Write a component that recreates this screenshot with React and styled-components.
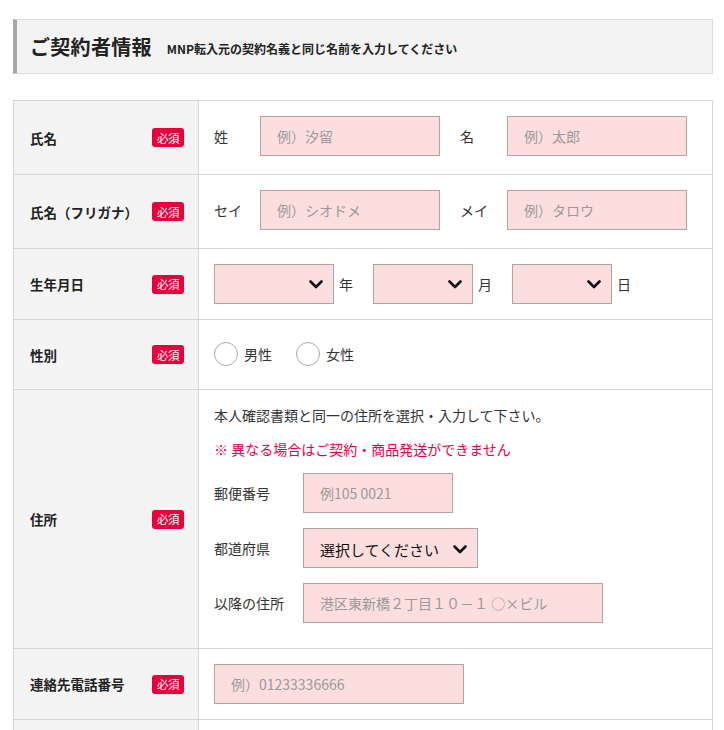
import React from 'react'
import styled, { createGlobalStyle } from 'styled-components'

const GlobalStyle = createGlobalStyle`
  body {
    margin: 0;
    background: #fff;
    font-family: "Noto Sans CJK JP", "Noto Sans", sans-serif;
    color: #333;
  }
`

const Chevron = () => (
  <svg width="14" height="9" viewBox="0 0 14 9">
    <path d="M1.5 1.5 L7 7 L12.5 1.5" fill="none" stroke="#111" strokeWidth="2.6" strokeLinecap="round" strokeLinejoin="round" />
  </svg>
)

const App = () => {
  return (
    <>
      <GlobalStyle />
      <Page>
        <Header>
          <Title>ご契約者情報</Title>
          <Sub>MNP転入元の契約名義と同じ名前を入力してください</Sub>
        </Header>
        <Table>
          <Row h={73}>
            <LabelCell><span>氏名</span><Badge>必須</Badge></LabelCell>
            <Cell lift={3}>
              <FieldLabel w={46}>姓</FieldLabel>
              <Input w={180} placeholder="例）汐留" />
              <FieldLabel w={67} pl={20}>名</FieldLabel>
              <Input w={180} placeholder="例）太郎" />
            </Cell>
          </Row>
          <Row h={73}>
            <LabelCell><span>氏名（フリガナ）</span><Badge>必須</Badge></LabelCell>
            <Cell lift={3}>
              <FieldLabel w={46}>セイ</FieldLabel>
              <Input w={180} placeholder="例）シオドメ" />
              <FieldLabel w={67} pl={20}>メイ</FieldLabel>
              <Input w={180} placeholder="例）タロウ" />
            </Cell>
          </Row>
          <Row h={70}>
            <LabelCell><span>生年月日</span><Badge>必須</Badge></LabelCell>
            <Cell lift={1}>
              <Select w={120}><span /><Chevron /></Select>
              <Unit>年</Unit>
              <Select w={100}><span /><Chevron /></Select>
              <Unit>月</Unit>
              <Select w={100}><span /><Chevron /></Select>
              <Unit>日</Unit>
            </Cell>
          </Row>
          <Row h={69}>
            <LabelCell><span>性別</span><Badge>必須</Badge></LabelCell>
            <Cell lift={2}>
              <Radio><Circle />男性</Radio>
              <Radio><Circle />女性</Radio>
            </Cell>
          </Row>
          <Row h={258}>
            <LabelCell><span>住所</span><Badge>必須</Badge></LabelCell>
            <AddressCell>
              <Note>本人確認書類と同一の住所を選択・入力して下さい。</Note>
              <Warn>※ 異なる場合はご契約・商品発送ができません</Warn>
              <AddrLine>
                <AddrLabel>郵便番号</AddrLabel>
                <Input w={150} placeholder="例105 0021" />
              </AddrLine>
              <AddrLine>
                <AddrLabel>都道府県</AddrLabel>
                <Select w={175} pad={16}><Chosen>選択してください</Chosen><Chevron /></Select>
              </AddrLine>
              <AddrLine>
                <AddrLabel>以降の住所</AddrLabel>
                <Input w={300} placeholder="港区東新橋２丁目１０－１ ○×ビル" />
              </AddrLine>
            </AddressCell>
          </Row>
          <Row h={70}>
            <LabelCell><span>連絡先電話番号</span><Badge>必須</Badge></LabelCell>
            <Cell lift={1}>
              <Input w={250} placeholder="例）01233336666" />
            </Cell>
          </Row>
          <Row h={70}>
            <LabelCell />
            <Cell />
          </Row>
        </Table>
      </Page>
    </>
  )
}

export default App

const Page = styled.div`
  padding: 19px 0 40px 13px;
  width: 700px;
`
const Header = styled.div`
  display: flex;
  align-items: center;
  height: 53px;
  background-color: #f3f3f3;
  border: 1px solid #dcdcdc;
  border-left: 4px solid #a9a9a9;
  padding-left: 13px;
  margin-bottom: 26px;
`
const Title = styled.h2`
  margin: 0 15px 0 0;
  font-size: 20px;
  font-weight: bold;
  color: #222;
  letter-spacing: 0.3px;
`
const Sub = styled.span`
  font-size: 12px;
  font-weight: bold;
  color: #222;
  padding-top: 3px;
`
const Table = styled.div`
  border: 1px solid #d6d6d6;
  border-bottom: none;
`
const Row = styled.div`
  display: grid;
  grid-template-columns: 185px 1fr;
  min-height: ${p => p.h}px;
  border-bottom: 1px solid #d6d6d6;
`
const LabelCell = styled.div`
  display: flex;
  align-items: center;
  justify-content: space-between;
  background-color: #f4f4f4;
  border-right: 1px solid #d6d6d6;
  padding: 0 14px 0 16px;
  font-size: 13.5px;
  font-weight: bold;
  color: #222;
`
const Badge = styled.span`
  display: inline-flex;
  align-items: center;
  justify-content: center;
  width: 32px;
  height: 19px;
  border-radius: 3px;
  background-color: #e8003a;
  color: #fff;
  font-size: 11.5px;
  font-weight: normal;
  letter-spacing: -0.5px;
`
const Cell = styled.div`
  display: flex;
  align-items: center;
  padding: 0 15px ${p => p.lift || 0}px;
  font-size: 14px;
`
const FieldLabel = styled.span`
  flex-shrink: 0;
  width: ${p => p.w}px;
  padding-left: ${p => p.pl || 0}px;
  box-sizing: border-box;
  white-space: nowrap;
  color: #333;
`
const Input = styled.input`
  flex-shrink: 0;
  box-sizing: border-box;
  width: ${p => p.w}px;
  height: 40px;
  background-color: #fddede;
  border: 1px solid #b4a2a2;
  border-radius: 0;
  padding: 0 16px;
  font-family: "Noto Sans CJK JP", sans-serif;
  font-size: 14px;
  outline: none;
  &::placeholder {
    color: #9a9a9a;
  }
`
const Select = styled.div`
  flex-shrink: 0;
  box-sizing: border-box;
  display: flex;
  align-items: center;
  justify-content: space-between;
  width: ${p => p.w}px;
  height: 40px;
  background-color: #fddede;
  border: 1px solid #b4a2a2;
  padding: 2px 10px 0 ${p => p.pad || 12}px;
`
const Chosen = styled.span`
  font-size: 15px;
  color: #111;
`
const Unit = styled.span`
  margin: 0 20px 0 5px;
  color: #333;
`
const Radio = styled.label`
  display: flex;
  align-items: center;
  margin-right: 24px;
  color: #333;
`
const Circle = styled.span`
  box-sizing: border-box;
  width: 24px;
  height: 24px;
  border-radius: 50%;
  border: 1px solid #aaa;
  background: #fff;
  margin-right: 6px;
`
const AddressCell = styled.div`
  display: flex;
  flex-direction: column;
  padding: 14px 15px 22px;
  font-size: 14px;
`
const Note = styled.p`
  margin: 0;
  line-height: 22px;
  color: #333;
`
const Warn = styled.p`
  margin: 12px 0 9px;
  line-height: 22px;
  color: #e4004a;
`
const AddrLine = styled.div`
  display: flex;
  align-items: center;
  margin-top: 4px;
  & + & {
    margin-top: 15px;
  }
`
const AddrLabel = styled.span`
  width: 89px;
  color: #333;
`
